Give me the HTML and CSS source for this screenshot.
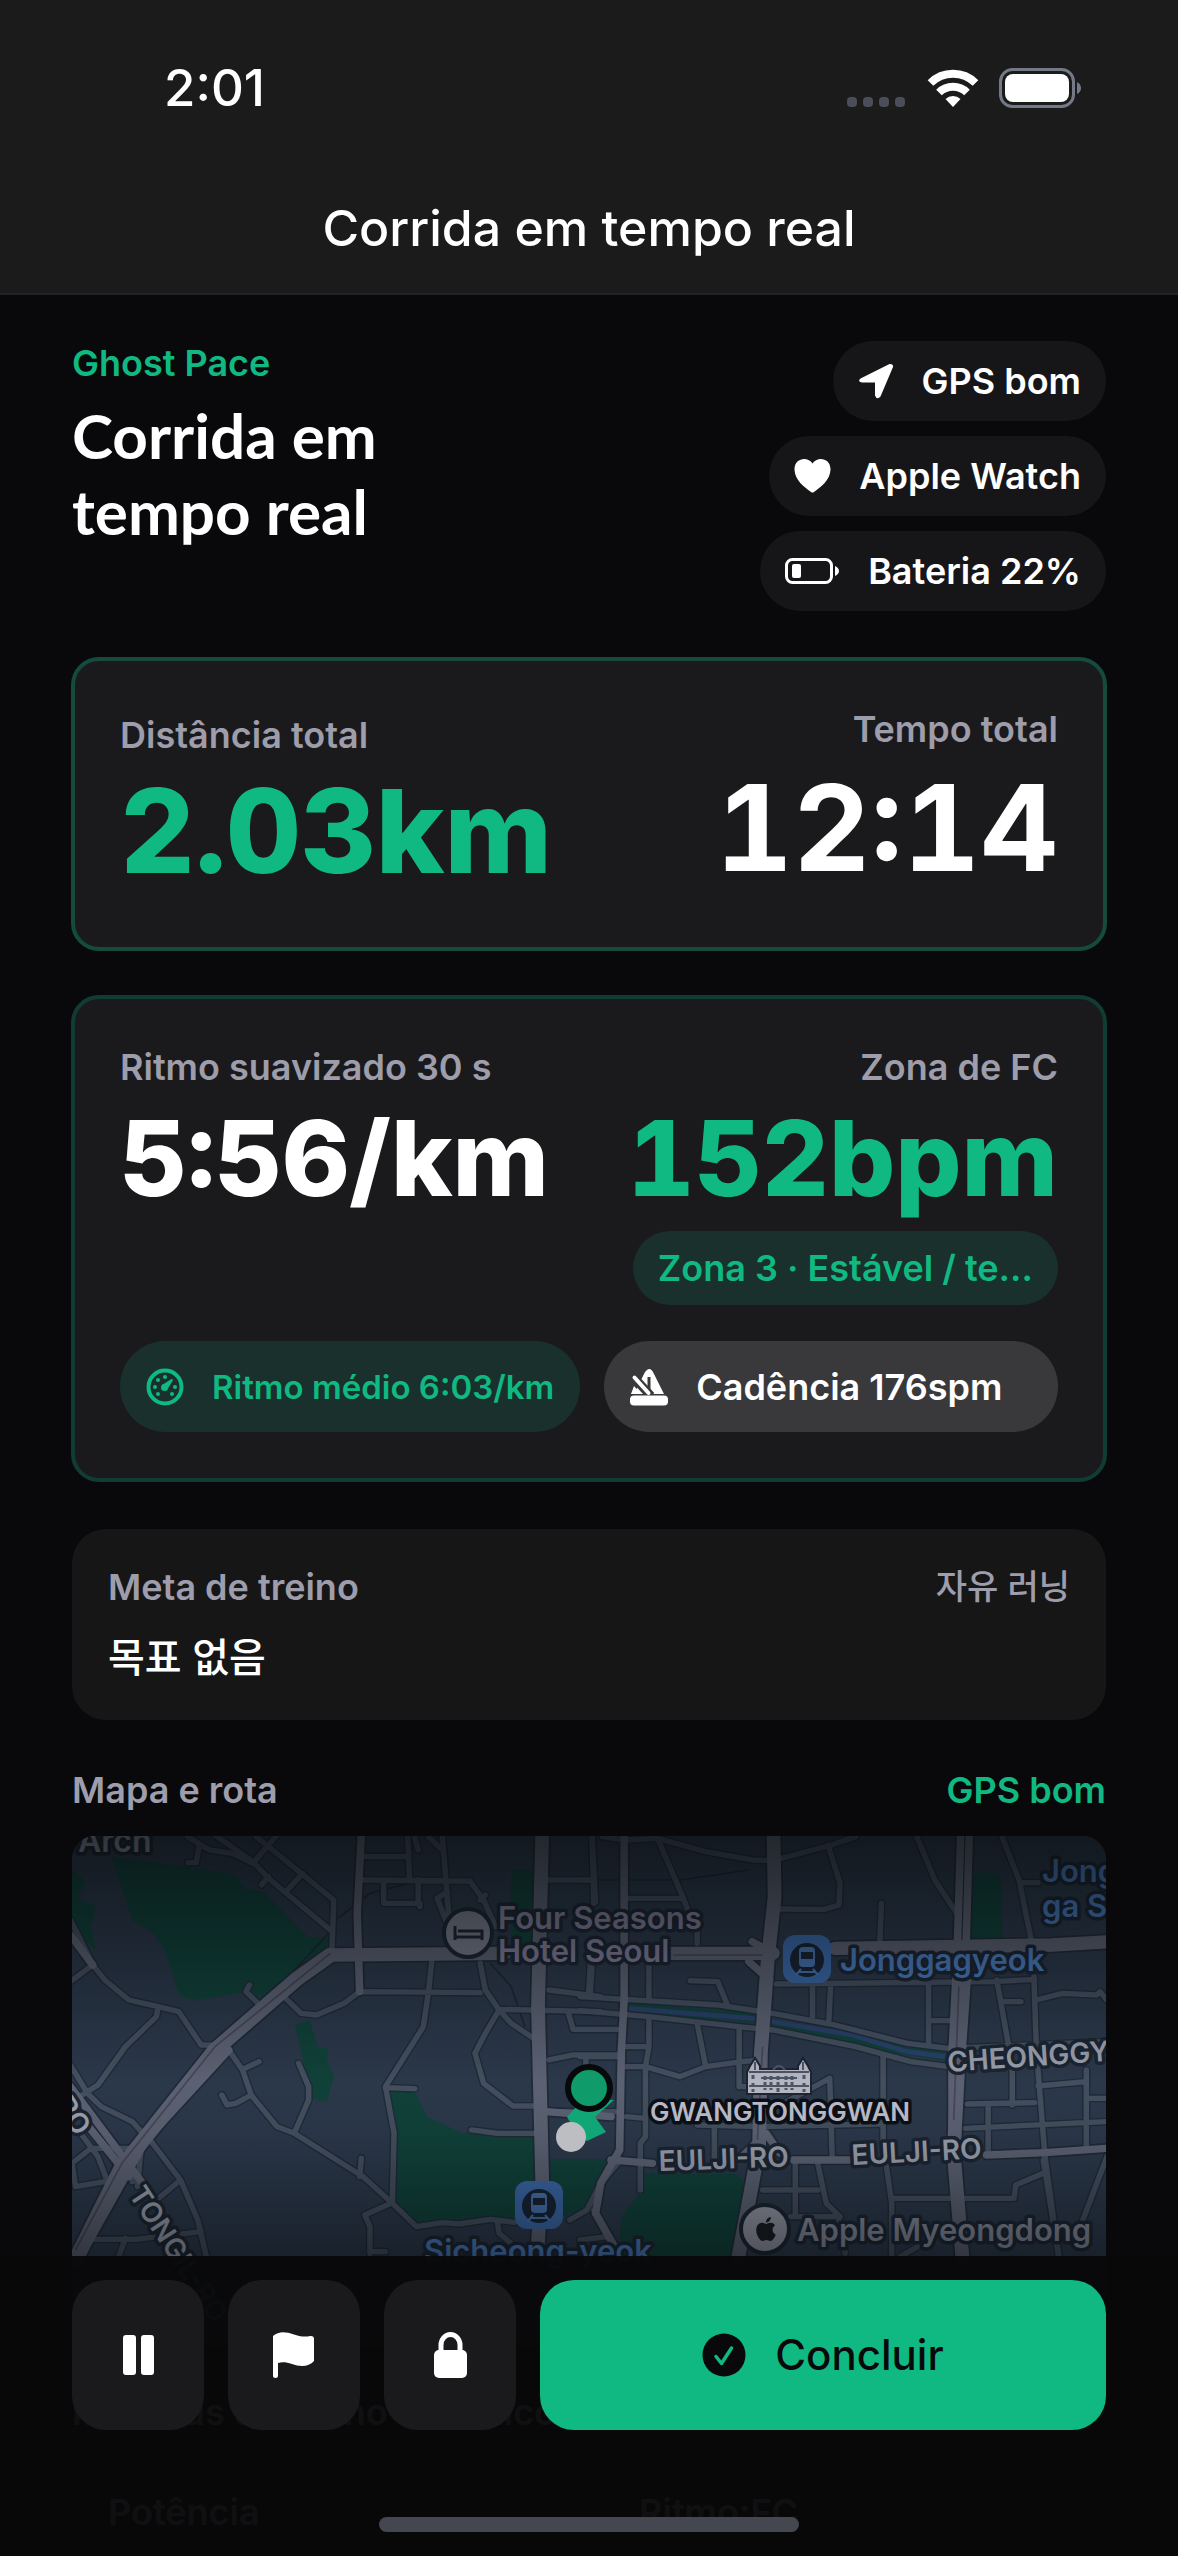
FILE: index.html
```html
<!DOCTYPE html>
<html lang="pt-BR">
<head>
<meta charset="utf-8">
<meta name="viewport" content="width=device-width, initial-scale=1">
<title>Corrida em tempo real</title>
<link rel="stylesheet" href="styles.css">
</head>
<body>
<header class="topbar">
  <div class="status">
    <time class="clock">2:01</time>
    <div class="status-icons">
      <svg width="60" height="40" viewBox="0 0 60 40" fill="#4b4d58" aria-hidden="true"><rect x="0" y="29" width="10" height="10" rx="4"/><rect x="16" y="29" width="10" height="10" rx="4"/><rect x="32" y="29" width="10" height="10" rx="4"/><rect x="48" y="29" width="10" height="10" rx="4"/></svg>
      <svg width="52" height="38" viewBox="0 0 52 38" fill="none" stroke="#fff" stroke-width="8" aria-hidden="true"><path d="M3.500 14a32 32 0 0 1 45 0"/><path d="M12 23.500a20 20 0 0 1 28 0"/><path d="M26 38l-7.500-8a11 11 0 0 1 15 0z" fill="#fff" stroke="none"/></svg>
      <svg width="84" height="40" viewBox="0 0 84 40" aria-hidden="true"><rect x="1.500" y="1.500" width="73" height="37" rx="12" fill="none" stroke="#737987" stroke-width="3"/><rect x="6" y="6" width="64" height="28" rx="8" fill="#fff"/><path d="M78 14q4 2 4 6t-4 6z" fill="#737987"/></svg>
    </div>
  </div>
  <p class="topbar-title">Corrida em tempo real</p>
</header>

<main class="content">
  <section class="intro">
    <div class="intro-text">
      <p class="label accent">Ghost Pace</p>
      <h1>Corrida em tempo real</h1>
    </div>
    <ul class="chips">
      <li class="chip"><svg width="36" height="36" viewBox="0 0 36 36" fill="#fff" aria-hidden="true"><path d="M2.500 15.500 31 1.200q4-1.200 4.200 2.300L22.500 33.500q-3.500 4-5.500-1V19.500H4q-5-1-1.500-4z"/></svg>GPS bom</li>
      <li class="chip"><svg width="37" height="36" viewBox="0 0 37 36" fill="#fff" aria-hidden="true"><path d="M18.500 5.500C23-2 37-.5 36.500 12 36 22 27 29 20 34q-1.500 1-3 0C10 29 1 22 .5 12 0-.5 14-2 18.500 5.500z"/></svg>Apple Watch</li>
      <li class="chip"><svg width="55" height="26" viewBox="0 0 55 26" aria-hidden="true"><rect x="1.500" y="1.500" width="45" height="23" rx="6" fill="none" stroke="#fff" stroke-width="3"/><rect x="7" y="6" width="9" height="14" rx="2" fill="#fff"/><path d="M50 8q4 2 4 5t-4 5z" fill="#fff"/></svg>Bateria 22%</li>
    </ul>
  </section>

  <section class="card totals">
    <div class="metric">
      <p class="label">Distância total</p>
      <p class="value distance accent">2.03km</p>
    </div>
    <div class="metric end">
      <p class="label">Tempo total</p>
      <p class="value elapsed">12:14</p>
    </div>
  </section>

  <section class="card soft">
    <div class="pair">
      <div class="metric">
        <p class="label">Ritmo suavizado 30 s</p>
        <p class="value">5:56/km</p>
      </div>
      <div class="metric end">
        <p class="label">Zona de FC</p>
        <p class="value accent">152bpm</p>
        <p class="zone">Zona 3 · Estável / te…</p>
      </div>
    </div>
    <div class="pills">
      <p class="pill green"><svg width="38" height="38" viewBox="0 0 38 38" aria-hidden="true"><circle cx="19" cy="19" r="16.500" fill="none" stroke="#10b981" stroke-width="4"/><g fill="#10b981"><circle cx="19" cy="9" r="2"/><circle cx="12" cy="12" r="2"/><circle cx="9" cy="19" r="2"/><circle cx="12" cy="26" r="2"/><circle cx="26" cy="26" r="2"/><circle cx="29" cy="19" r="2"/><circle cx="18.500" cy="19.500" r="3.500"/><path d="m16 17 9.500-6q2 0 1 2L21 22z"/></g></svg>Ritmo médio 6:03/km</p>
      <p class="pill grey"><svg width="38" height="38" viewBox="0 0 38 38" aria-hidden="true"><path d="M4 26 14.500 5q5-8 9 0L34 26z" fill="#fff"/><path d="M3 8.500 21 28" stroke="#39393b" stroke-width="9"/><path d="M19 9v13" stroke="#39393b" stroke-width="3"/><path d="m4.500 9.500 14 15.500" stroke="#fff" stroke-width="4" stroke-linecap="round"/><path d="m4 18 7 8H1z" fill="#fff"/><rect x="0" y="27.500" width="38" height="10" rx="4" fill="#fff"/></svg>Cadência 176spm</p>
    </div>
  </section>

  <section class="goal">
    <div class="row"><p class="label">Meta de treino</p><p class="label ko">자유 러닝</p></div>
    <p class="goal-value">목표 없음</p>
  </section>

  <section class="route">
    <div class="row"><p class="label">Mapa e rota</p><p class="label accent">GPS bom</p></div>
    <svg class="map" viewBox="0 0 1034 512" role="img" aria-label="Mapa e rota">
      <defs>
        <linearGradient id="shade" x2="0" y2="1"><stop offset="0" stop-color="#05080a" stop-opacity=".66"/><stop offset=".22" stop-color="#05080a" stop-opacity=".36"/><stop offset=".48" stop-color="#05080a" stop-opacity="0"/><stop offset=".58" stop-color="#05080a" stop-opacity=".05"/><stop offset=".82" stop-color="#05080a" stop-opacity=".48"/><stop offset="1" stop-color="#05080a" stop-opacity=".6"/></linearGradient>
        <g id="minor">
          <path d="M370 50 410 75 435 90 500 100 560 130M405 75 395 128H372M450 45 560 125 605 175 785 330M570 50 795 240 790 380M630 45 560 130M705 160 660 210M605 170 585 195M880 110H1010M1010 45V60L1015 180M1030 50 1040 90M1070 50 1110 90M880 180 1190 183 1230 240 1265 320M940 180V250H1045V260M1040 180V245M1110 45 1130 300M1125 215 1095 235 1120 300M1235 225 1220 240"/>
          <path d="M30 300 60 360 95 435M30 485 95 435 130 480 200 540 285 560 345 575 410 675H450M285 560 280 590 190 680 110 795 50 835M30 735 80 820 120 860 210 905 240 940M575 550 540 515 550 495M490 690 530 750 555 825 630 920 680 940 880 1070 960 1145M530 748 578 725M550 828 510 850 485 855 470 825M693 730 722 800V840L680 940M875 1015 870 1070"/>
          <path d="M650 530 700 580 745 585 825 550 870 515 1220 518M1080 420 1070 515 1055 620 945 800 970 940 965 1145M945 803 1030 806M1220 430 1235 510 1275 570 1310 610 1375 655M1275 570 1235 640 1205 700 1230 790 1315 858H1380M1275 568 1570 575M1195 930 1270 940H1380M960 1145 1035 1220 1110 1208 1160 1212 1250 1198 1320 1207M960 1150 885 1185 900 1220V1300M900 1295H945M1270 1205 1275 1240 1310 1270"/>
          <path d="M265 965 350 1080 400 1200 425 1310M210 1085V985H90L35 1030 45 1100 130 1085M350 1080 280 1140M85 1258H220L410 1235M190 1255 170 1310M60 940 110 1010 140 1090M235 990 225 1100M1420 180H1550M1545 50 1550 250M1545 430 1540 520M1420 510 1570 530M1475 575 1490 628H1620M1420 720 1490 705H1620M1527 705V740M1420 875H1620"/>
          <g transform="translate(1510)">
            <path d="M65 50 130 60 225 55 365 95 500 120 560 122 730 75 800 50M225 55 300 235 320 290M135 235H300M35 50 45 245M0 180H40M720 75 755 190 752 255 710 268 575 267M875 250 870 380M978 50 1030 180 1100 290M1225 50 1275 180 1310 360M1280 188H1330M30 430 25 520M200 430V540M320 482 400 485 430 560M340 330V370"/>
            <path d="M0 530 400 555 560 580 740 615 950 670 1070 685 1530 665M0 572 200 590 480 622 560 630 800 680 960 725 1070 740M570 492 1200 485 1320 478M675 500V590M728 490 722 610M1012 490V675M1012 602H1085M1210 480 1245 680M1225 545H1280M1318 470 1325 690 1350 1010 1390 1310M1325 540 1400 520 1500 525 1510 515 1530 540"/>
            <path d="M200 590V680H135M200 680 190 740H135M190 740 290 770 365 740 470 725 520 720M340 610 365 740M462 625V800H500M600 845 725 775 732 1010M190 740V950L175 970V1110M135 890 190 895M340 915 530 920 870 912M390 920V1040M880 705V970L905 1150V1310M1125 852 1320 848M1255 740V855M1120 925 1530 905M1330 798 1470 785M1470 750V980M1470 835H1530M1185 855V1000M530 1110H690M625 1020V1190M690 1030 715 1150 755 1190H610M905 1135H1260L1265 1095 1345 1060M1530 1010 1460 1200M1345 1020 1390 1310M750 1190 770 1300M980 1280 930 1310"/>
            <path d="M0 710 110 710M-30 1200 20 1170 60 1090M60 1090 110 1030M0 1260 80 1250 40 1170"/>
          </g>
        </g>
        <g id="major">
          <path class="w24" d="M875 45 863 280 870 515M30 345 95 435M30 800 240 1090M75 910 200 1070"/>
          <path class="w36" d="M1400 45 1388 560 1400 1080 1385 1310M785 405 1290 400M1770 400H2070M2250 385 2880 375 3045 365"/>
          <path class="w44" d="M785 405 690 475 450 690 180 1040 45 1320"/>
          <path class="w24" d="M490 690 250 960 60 1310M1410 875 1600 890M1600 1020 1720 1030M2130 1020H2290M2690 1005 2860 998 3040 985"/>
          <g transform="translate(1510)">
            <path class="w24" d="M128 50V540L120 690 115 990 60 1090 45 1180 100 1280M1105 50 1095 400 1080 700 1080 1000"/>
            <path class="w36" d="M562 50 565 230 545 420 525 700 520 980 460 1310M1115 480 1100 700 1085 1000 1110 1310"/>
            <path class="w24" d="M1130 50 1118 480M500 365 560 400M490 425 550 480M470 1010 540 940 580 1000"/>
          </g>
        </g>
        <g id="train"><rect width="48" height="48" rx="12" fill="#3a68a8"/><circle cx="24" cy="25" r="17" fill="#182234"/><rect x="16" y="12" width="16" height="20" rx="4" fill="#4673ae"/><rect x="18" y="17" width="12" height="7" fill="#182234"/><path d="m18 34-5 6M30 34l5 6M16 37h16" stroke="#4673ae" stroke-width="2"/></g>
      </defs>
      <rect width="1034" height="512" fill="#2b384a"/>
      <g transform="translate(-12 -16) scale(.3444 .3333)">
        <g fill="#104139">
          <path d="M150 110 500 160 540 205 590 215 720 350 785 355 770 390 590 530 520 520 390 542 345 525 305 390 270 340 210 300zM30 150 75 180 50 235 105 260 90 320 105 390 60 350 30 290zM682 615 725 600 748 682 778 685 775 720 795 768 775 847 732 835zM957 812H1030L1065 890 1165 938H1375V1200L1110 1208 1035 1215 970 1140 975 930zM1310 150H1382V390H1310zM1422 1018H1590L1560 1150 1422 1205z"/>
          <path d="M1690 1060 1960 1062 1995 1090 1955 1310H1620L1630 1190 1690 1110zM2635 180 2680 150 2730 170 2738 365H2640zM1650 550 2030 580V610L1650 575zM2060 595 2300 640 2570 695V722L2360 690 2060 625z"/>
        </g>
        <path d="M1650 565 2010 595 2300 645 2460 695 2570 710" fill="none" stroke="#29406a" stroke-width="14"/>
        <path d="M1420 180H1800L2000 150M1250 430 1310 500 1350 620M800 300 900 220 1050 180M780 340 600 540" fill="none" stroke="#1c2635" stroke-width="5"/>
        <use href="#minor" class="minor-case"/><use href="#major" class="major-case"/>
        <use href="#minor" class="minor-road"/><use href="#major" class="major-road"/>
        <path d="M785 400 450 680 180 1030 45 1290M1780 405H2040M2610 500 2595 900M2040 680 2025 960" fill="none" stroke="#464657" stroke-width="5"/>
      </g>
      <g class="map-text">
        <text class="t32 grey-t" x="6" y="16">Arch</text>
        <text class="t31 lilac-t" x="426" y="93">Four Seasons</text>
        <text class="t31 lilac-t" x="426" y="126">Hotel Seoul</text>
        <text class="t31 blue-t" x="768" y="135">Jonggagyeok</text>
        <text class="t31 blue-t" x="970" y="46">Jong-</text>
        <text class="t31 blue-t" x="970" y="81">ga Sta.</text>
        <text class="t28 street-t" x="876" y="236" transform="rotate(-4 876 236)">CHEONGGYE</text>
        <text class="t28 street-t" x="587" y="335" transform="rotate(-2 587 335)">EULJI-RO</text>
        <text class="t28 street-t" x="780" y="329" transform="rotate(-3 780 329)">EULJI-RO</text>
        <text class="t28 street-t" x="56" y="358" transform="rotate(57 56 358)">TONGIL-RO</text>
        <text class="t28 street-t" x="-18" y="268" transform="rotate(57 -18 268)">RO</text>
        <text class="t26 landmark-t" x="578" y="285">GWANGTONGGWAN</text>
        <text class="t31 grey-t" x="725" y="405">Apple Myeongdong</text>
        <text class="t31 blue-t" x="352" y="426">Sicheong-yeok</text>
      </g>
      <g stroke="#1b2431" stroke-width="4"><circle cx="396" cy="97" r="24" fill="#787c8b"/><circle cx="693" cy="393" r="24" fill="#9497a5"/></g>
      <path d="M383 90v14M383 101h27v-6h-24M410 95v9M388 95h6" fill="none" stroke="#1b2431" stroke-width="3"/>
      <path transform="translate(682 381)" fill="#181b20" d="M12.152 6.896c-.948 0-2.415-1.078-3.960-1.040-2.040.027-3.910 1.183-4.961 3.014-2.117 3.675-.546 9.103 1.519 12.090 1.013 1.454 2.208 3.090 3.792 3.039 1.520-.065 2.090-.987 3.935-.987 1.831 0 2.350.987 3.960.948 1.637-.026 2.676-1.480 3.676-2.948 1.156-1.688 1.636-3.325 1.662-3.415-.039-.013-3.182-1.221-3.220-4.857-.026-3.040 2.480-4.494 2.597-4.559-1.429-2.090-3.623-2.324-4.390-2.376-2-.156-3.675 1.090-4.610 1.090zM15.530 3.830c.843-1.012 1.400-2.427 1.245-3.830-1.207.052-2.662.805-3.532 1.818-.780.896-1.454 2.338-1.273 3.714 1.338.104 2.715-.688 3.559-1.701"/>
      <use href="#train" x="711" y="99"/><use href="#train" x="443" y="345"/>
      <g transform="translate(675 222)"><path d="M0 36V14l3-6 5-8 5 8v3h38V8l5-8 5 8 3 6v22z" fill="#b4b7c2" stroke="#1b2431" stroke-width="2"/><path d="M2 14h60M14 20h36M2 28h60M8 4v8M56 4v8" stroke="#4d5466" stroke-width="2"/><path d="M6 17v5m0 3v9M18 18v14m6-14v14m7-14v18m8-18v14m6-14v14M57 17v5m0 3v9" stroke="#4d5466" stroke-width="3" stroke-dasharray="4 2"/><path d="M26 12q6-8 12 0" fill="none" stroke="#4d5466" stroke-width="2"/></g>
      <rect width="1034" height="512" fill="url(#shade)"/>
      <path d="M542 264 523 281 534 296 515 305 502 293 495 281 512 262z" fill="#10a676"/>
      <circle cx="517" cy="252" r="21" fill="#109b6b" stroke="#08090b" stroke-width="6"/>
      <circle cx="499" cy="301" r="15" fill="#bdbec2"/>
    </svg>
  </section>

  <section class="advanced">
    <h2 class="label">Métricas de treino dinâmico</h2>
    <div class="advanced-grid"><p class="label">Potência</p><p class="label">Ritmo:FC</p></div>
  </section>
</main>

<footer class="controls">
  <div class="buttons">
    <button class="btn" type="button" aria-label="Pausar"><svg width="31" height="40" viewBox="0 0 31 40" fill="#fff" aria-hidden="true"><rect width="13" height="40" rx="3"/><rect x="18" width="13" height="40" rx="3"/></svg></button>
    <button class="btn" type="button" aria-label="Marcar volta"><svg width="42" height="46" viewBox="0 0 42 46" fill="#fff" aria-hidden="true"><path d="M0 4C6-1 12-.5 21 2.500 29 5 33 5 37 4q4-.5 4 3v22c-5 6-14 6-22 3-6-2-10-2-14-1v12.500a2.500 2.500 0 0 1-5 0z"/></svg></button>
    <button class="btn" type="button" aria-label="Bloquear"><svg width="33" height="46" viewBox="0 0 33 46" aria-hidden="true"><path d="M7 20V13a9.500 10.500 0 0 1 19 0v7" fill="none" stroke="#fff" stroke-width="5"/><rect y="18" width="33" height="28" rx="5" fill="#fff"/></svg></button>
    <button class="btn finish" type="button"><svg width="44" height="44" viewBox="0 0 44 44" aria-hidden="true"><circle cx="22" cy="22" r="21.500" fill="#09090b"/><path d="m14 23.500 5.500 7L29.500 15" fill="none" stroke="#10b981" stroke-width="3.500" stroke-linecap="round" stroke-linejoin="round"/></svg>Concluir</button>
  </div>
  <div class="home-bar"></div>
</footer>
</body>
</html>
```
FILE: styles.css
```css
* { box-sizing: border-box; }
body {
  margin: 0;
  min-height: 100vh;
  background: #09090b;
  color: #fff;
  font-family: Inter, "Noto Sans CJK KR", sans-serif;
  font-size: 36px;
  font-weight: 600;
  line-height: 44px;
}
p, h1, h2, ul { margin: 0; padding: 0; }
svg { display: block; flex-shrink: 0; }

.topbar { background: #1b1b1b; border-bottom: 2px solid #1f2429; padding: 56px 95px 33px 164px; }
.status { display: flex; align-items: center; justify-content: space-between; height: 64px; }
.clock { font-size: 51px; font-weight: 500; }
.status-icons { display: flex; align-items: center; gap: 20px; }
.topbar-title { margin: 76px -95px 0 -164px; font-size: 50px; font-weight: 500; line-height: 64px; text-align: center; }

.content { padding: 46px 72px 0; }
.label { font-size: 36px; font-weight: 600; line-height: 44px; color: #9d9dab; }
.accent { color: #10b981; }

.intro { display: flex; justify-content: space-between; gap: 24px; }
.intro h1 { max-width: 340px; margin-top: 12px; font-family: Lato, Inter, sans-serif; font-size: 62px; font-weight: 700; line-height: 76px; }
.chips { list-style: none; display: flex; flex-direction: column; align-items: flex-end; gap: 15px; }
.chip { display: flex; align-items: center; gap: 28px; height: 80px; padding: 0 25px; border-radius: 40px; background: #161618; }

.card { margin: 46px -1px 0; padding: 46px 45px; border: 4px solid #144b3d; border-radius: 28px; background: #1a1a1c; }
.card.soft { margin-top: 44px; border-color: #113c33; }
.totals, .pair { display: flex; justify-content: space-between; }
.totals { align-items: flex-end; }
.metric { display: flex; flex-direction: column; gap: 4px; }
.metric.end { align-items: flex-end; text-align: right; }
.value { font-size: 104px; font-weight: 800; line-height: 130px; font-variant-numeric: tabular-nums; }
.distance { font-size: 116px; line-height: 140px; }
.elapsed { font-size: 120px; font-weight: 700; line-height: 146px; }
.zone { margin-top: 4px; padding: 15px 25px; border-radius: 37px; background: #19302c; color: #10b981; }
.pills { display: grid; grid-template-columns: 1fr 1fr; gap: 24px; margin-top: 36px; }
.pill { display: flex; align-items: center; gap: 28px; height: 91px; padding: 0 26px; border-radius: 46px; white-space: nowrap; }
.pill.green { background: #19302c; color: #10b981; font-size: 33px; }
.pill.grey { background: #39393b; }

.row { display: flex; justify-content: space-between; }
.goal { margin-top: 47px; padding: 36px; border-radius: 34px; background: #161617; }
.goal .ko { font-size: 34px; font-weight: 500; }
.goal-value { margin-top: 23px; font-size: 40px; font-weight: 500; line-height: 52px; }

.route { margin-top: 48px; }
.map { width: 100%; height: auto; margin-top: 24px; border-radius: 24px; overflow: hidden; }
.minor-case, .major-case, .minor-road, .major-road { fill: none; stroke-linejoin: round; stroke-linecap: round; }
.minor-case { stroke: #1f2a38; stroke-width: 24px; }
.major-case { stroke: #1f2a38; --grow: 10px; }
.minor-road { stroke: #434e5e; stroke-width: 16px; }
.major-road { stroke: #5b6172; --grow: 0px; }
.w24 { stroke-width: calc(22px + var(--grow)); }
.w36 { stroke-width: calc(40px + var(--grow)); }
.w44 { stroke-width: calc(44px + var(--grow)); }
.map-text { font-weight: 600; paint-order: stroke; stroke: #1b2431; stroke-width: 7px; stroke-linejoin: round; }
.t26 { font-size: 26px; }
.t28 { font-size: 28px; }
.t31 { font-size: 31px; }
.t32 { font-size: 32px; }
.grey-t { fill: #868b9b; }
.lilac-t { fill: #827f9b; }
.blue-t { fill: #4a7dc0; }
.street-t { fill: #9a9fad; }
.landmark-t { fill: #bbbdca; stroke: #0c1016; }

.advanced { margin-top: 42px; }
.advanced-grid { display: grid; grid-template-columns: 1fr 1fr; gap: 64px; padding: 56px 0 0 36px; }

.controls { position: fixed; inset: auto 0 0; padding: 24px 72px; background: rgb(8 8 10 / 95%); }
.buttons { display: grid; grid-template-columns: 132px 132px 132px 1fr; gap: 24px; }
.btn { display: flex; align-items: center; justify-content: center; height: 150px; padding: 0; border: 0; border-radius: 34px; background: #1a1a1c; color: #fff; font: inherit; }
.finish { gap: 29px; background: #10b981; color: #09090b; font-size: 42px; font-weight: 500; }
.home-bar { width: 420px; height: 15px; margin: 87px auto 0; border-radius: 8px; background: #454750; }
```
